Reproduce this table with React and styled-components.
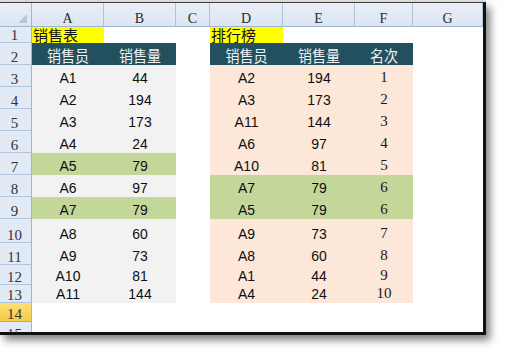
import React from 'react';
import styled, { createGlobalStyle } from 'styled-components';

const Global = createGlobalStyle`
  html, body { margin: 0; padding: 0; background: #fff; }
  body { width: 508px; height: 356px; overflow: hidden; }
  * { box-sizing: border-box; }
`;

const COLS = [32, 72, 72, 34, 73, 72, 58, 70];
const ROW_H = [16, 22, 22, 22, 22, 22, 22, 22, 22, 24, 22, 20, 18, 19, 20];
const LETTERS = ['A', 'B', 'C', 'D', 'E', 'F', 'G'];

const GREY = '#f2f2f2';
const PEACH = '#fde7d8';
const GREEN = '#c4d79b';
const TEAL = '#23505f';
const YELLOW = '#ffff00';
const WHITE = '#ffffff';

const Page = styled.div`
  width: 508px;
  height: 356px;
  background: #fff;
`;

const TopStrip = styled.div`
  width: 486px;
  height: 2px;
  background: #e2e2e2;
`;

const Frame = styled.div`
  width: 486px;
  border-top: 1px solid #3c3c3c;
  border-right: 3px solid #111;
  border-bottom: 3px solid #111;
  box-shadow: 4px 5px 8px rgba(0, 0, 0, 0.5);
  background: #fff;
`;

const Sheet = styled.div`
  display: grid;
  grid-template-columns: ${COLS.map((c) => c + 'px').join(' ')};
  grid-template-rows: 24px ${ROW_H.map((h) => h + 'px').join(' ')};
  height: 329px;
  overflow: hidden;
`;

const Corner = styled.div`
  background: linear-gradient(#e9eff8, #dce5f1);
  border-right: 1px solid #9eb6ce;
  border-bottom: 1px solid #9eb6ce;
  display: flex;
  justify-content: flex-end;
  align-items: flex-end;
  padding: 0 4px 3px 0;
`;

const ColHead = styled.div`
  background: linear-gradient(#e9eff8, #dce5f1);
  border-right: 1px solid #b0c3da;
  border-bottom: 1px solid #9eb6ce;
  display: flex;
  justify-content: center;
  align-items: flex-end;
  font-family: 'Liberation Serif', serif;
  font-size: 14px;
  line-height: 1;
  color: #2a2a2a;
`;

const RowHead = styled.div`
  background: ${(p) => (p.$active ? 'linear-gradient(#fbe07a, #f5ca45)' : '#e2eaf5')};
  border-right: 1px solid #9eb6ce;
  border-bottom: 1px solid ${(p) => (p.$active ? '#d2a73c' : '#b2c5dc')};
  display: flex;
  justify-content: center;
  align-items: flex-end;
  padding-right: 2px;
  font-family: 'Liberation Serif', serif;
  font-size: 15px;
  line-height: 13px;
  color: #333;
`;

const Cell = styled.div`
  background: ${(p) => p.$bg};
  display: flex;
  justify-content: ${(p) => p.$justify || 'center'};
  align-items: ${(p) => p.$align || 'flex-end'};
  padding: ${(p) => p.$pad || '0 0 2px 0'};
  overflow: hidden;
  white-space: nowrap;
`;

const DataText = styled.span`
  font-family: 'Liberation Sans', Arial, sans-serif;
  font-size: 14px;
  line-height: 1;
  color: #0e0e0e;
  display: inline-block;
  transform: scaleY(1.1);
  transform-origin: 50% 100%;
`;

const HeadText = styled.span`
  font-family: 'Noto Sans CJK SC', sans-serif;
  font-size: 14px;
  line-height: 16px;
  height: 16px;
  color: #eef2f3;
  display: inline-block;
  transform: scaleY(1.1);
`;

const TitleText = styled.span`
  font-family: 'Noto Sans CJK SC', sans-serif;
  font-size: 15px;
  line-height: 16px;
  height: 16px;
  display: inline-block;
  color: #111;
`;

const RankText = styled.span`
  font-family: 'Liberation Serif', serif;
  font-size: 15px;
  line-height: 1;
  color: #1a1a1a;
`;

const left = [
  ['A1', 44], ['A2', 194], ['A3', 173], ['A4', 24], ['A5', 79], ['A6', 97],
  ['A7', 79], ['A8', 60], ['A9', 73], ['A10', 81], ['A11', 144],
];
const right = [
  ['A2', 194, 1], ['A3', 173, 2], ['A11', 144, 3], ['A6', 97, 4], ['A10', 81, 5],
  ['A7', 79, 6], ['A5', 79, 6], ['A9', 73, 7], ['A8', 60, 8], ['A1', 44, 9], ['A4', 24, 10],
];
const greenL = new Set([4, 6]);
const greenR = new Set([5, 6]);

const empty = { kind: 'empty', bg: WHITE };

function buildRow(n) {
  if (n === 1) {
    return [
      { kind: 'title', bg: YELLOW, text: '销售表' }, empty, empty,
      { kind: 'title', bg: YELLOW, text: '排行榜' }, empty, empty, empty,
    ];
  }
  if (n === 2) {
    return [
      { kind: 'head', bg: TEAL, text: '销售员' }, { kind: 'head', bg: TEAL, text: '销售量' }, empty,
      { kind: 'head', bg: TEAL, text: '销售员' }, { kind: 'head', bg: TEAL, text: '销售量' },
      { kind: 'head', bg: TEAL, text: '名次' }, empty,
    ];
  }
  if (n >= 3 && n <= 13) {
    const i = n - 3;
    const lb = greenL.has(i) ? GREEN : GREY;
    const rb = greenR.has(i) ? GREEN : PEACH;
    return [
      { kind: 'data', bg: lb, text: left[i][0] }, { kind: 'data', bg: lb, text: left[i][1] }, empty,
      { kind: 'data', bg: rb, text: right[i][0] }, { kind: 'data', bg: rb, text: right[i][1] },
      { kind: 'rank', bg: rb, text: right[i][2] }, empty,
    ];
  }
  return [empty, empty, empty, empty, empty, empty, empty];
}

function SheetCell({ spec }) {
  switch (spec.kind) {
    case 'title':
      return (
        <Cell $bg={spec.bg} $justify="flex-start" $align="center" $pad="0 0 0 1px">
          <TitleText>{spec.text}</TitleText>
        </Cell>
      );
    case 'head':
      return (
        <Cell $bg={spec.bg} $align="center" $pad="2px 0 0 0">
          <HeadText>{spec.text}</HeadText>
        </Cell>
      );
    case 'data':
      return (
        <Cell $bg={spec.bg}>
          <DataText>{spec.text}</DataText>
        </Cell>
      );
    case 'rank':
      return (
        <Cell $bg={spec.bg}>
          <RankText>{spec.text}</RankText>
        </Cell>
      );
    default:
      return <Cell $bg={spec.bg} />;
  }
}

export default function App() {
  const rows = Array.from({ length: 15 }, (_, k) => k + 1);
  return (
    <Page>
      <Global />
      <TopStrip />
      <Frame>
        <Sheet>
          <Corner>
            <svg width="9" height="9" viewBox="0 0 9 9">
              <polygon points="9,0 9,9 0,9" fill="#b9c5d3" />
            </svg>
          </Corner>
          {LETTERS.map((l) => (
            <ColHead key={l}>{l}</ColHead>
          ))}
          {rows.map((n) => (
            <React.Fragment key={n}>
              <RowHead $active={n === 14}>{n}</RowHead>
              {buildRow(n).map((spec, ci) => (
                <SheetCell key={ci} spec={spec} />
              ))}
            </React.Fragment>
          ))}
        </Sheet>
      </Frame>
    </Page>
  );
}
